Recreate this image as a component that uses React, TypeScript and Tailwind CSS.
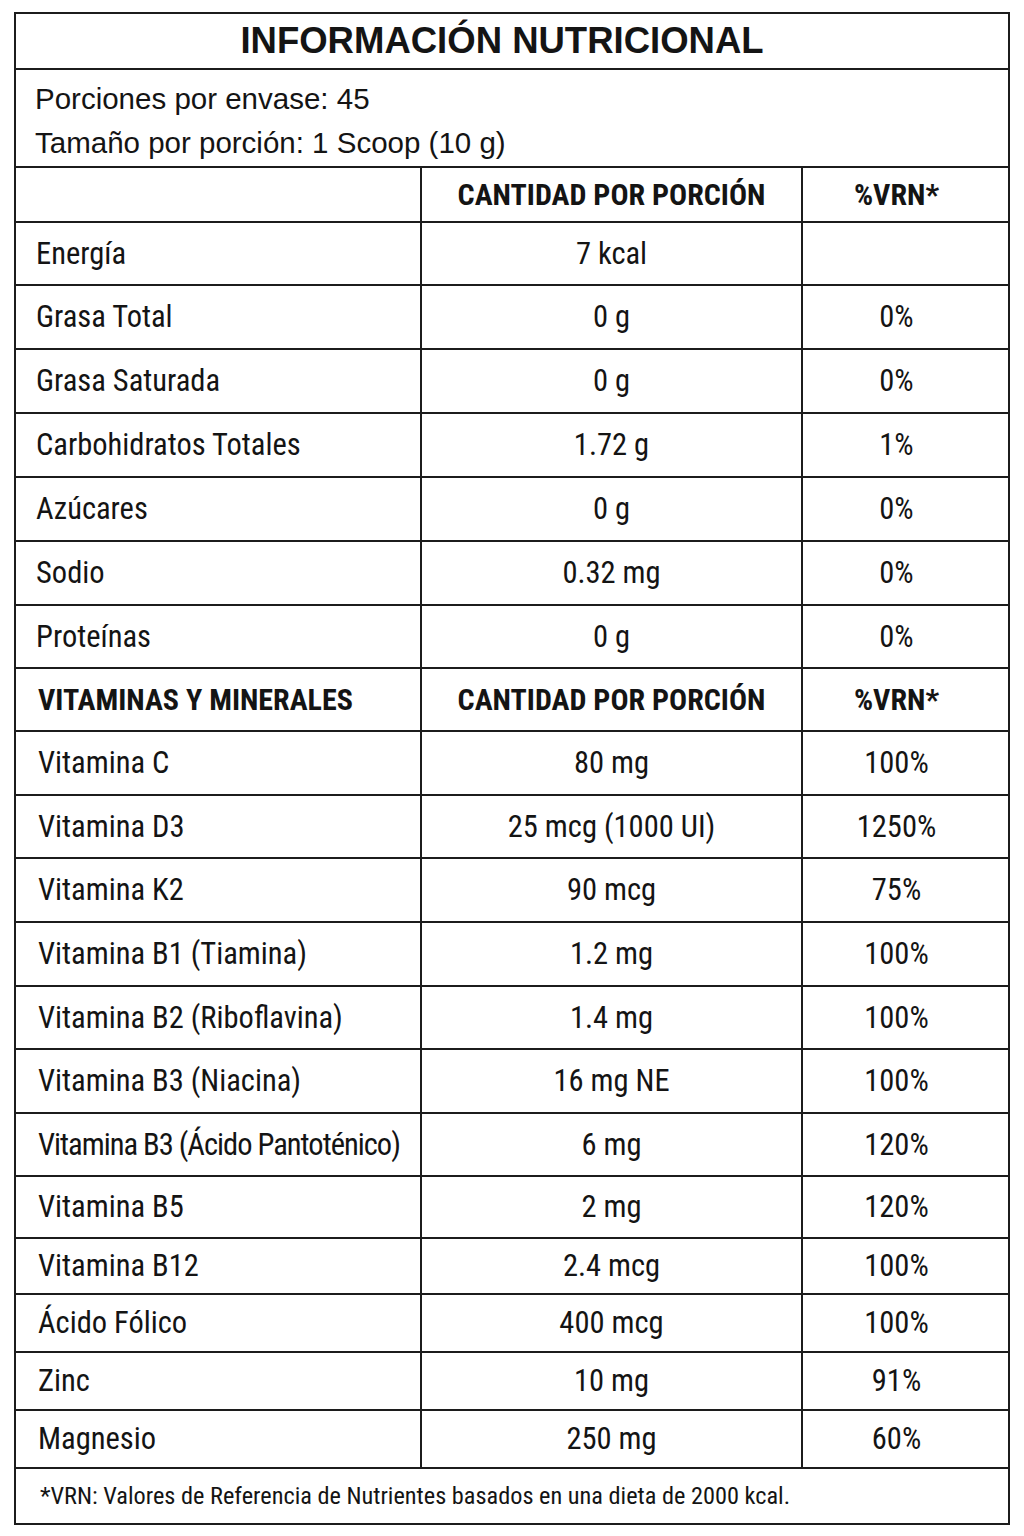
const narrow = "font-['Roboto',sans-serif] font-stretch-condensed"

type Row = { name: string; amount: string; vrn: string; h: string; tight?: boolean }

const nutrients: Row[] = [
  { name: 'Energía', amount: '7 kcal', vrn: '', h: 'h-[63px]' },
  { name: 'Grasa Total', amount: '0 g', vrn: '0%', h: 'h-[64px]' },
  { name: 'Grasa Saturada', amount: '0 g', vrn: '0%', h: 'h-[64px]' },
  { name: 'Carbohidratos Totales', amount: '1.72 g', vrn: '1%', h: 'h-[64px]' },
  { name: 'Azúcares', amount: '0 g', vrn: '0%', h: 'h-[64px]' },
  { name: 'Sodio', amount: '0.32 mg', vrn: '0%', h: 'h-[64px]' },
  { name: 'Proteínas', amount: '0 g', vrn: '0%', h: 'h-[63px]' },
]

const vitamins: Row[] = [
  { name: 'Vitamina C', amount: '80 mg', vrn: '100%', h: 'h-[64px]' },
  { name: 'Vitamina D3', amount: '25 mcg (1000 UI)', vrn: '1250%', h: 'h-[63px]' },
  { name: 'Vitamina K2', amount: '90 mcg', vrn: '75%', h: 'h-[64px]' },
  { name: 'Vitamina B1 (Tiamina)', amount: '1.2 mg', vrn: '100%', h: 'h-[64px]' },
  { name: 'Vitamina B2 (Riboflavina)', amount: '1.4 mg', vrn: '100%', h: 'h-[63px]' },
  { name: 'Vitamina B3 (Niacina)', amount: '16 mg NE', vrn: '100%', h: 'h-[64px]' },
  { name: 'Vitamina B3 (Ácido Pantoténico)', amount: '6 mg', vrn: '120%', h: 'h-[63px]', tight: true },
  { name: 'Vitamina B5', amount: '2 mg', vrn: '120%', h: 'h-[62px]' },
  { name: 'Vitamina B12', amount: '2.4 mcg', vrn: '100%', h: 'h-[56px]' },
  { name: 'Ácido Fólico', amount: '400 mcg', vrn: '100%', h: 'h-[58px]' },
  { name: 'Zinc', amount: '10 mg', vrn: '91%', h: 'h-[58px]' },
  { name: 'Magnesio', amount: '250 mg', vrn: '60%', h: 'h-[58px]' },
]

function TableRow({ r, pad }: { r: Row; pad: string }) {
  return (
    <div className={`flex border-b-2 border-[#1c1c1c] ${r.h} ${narrow} text-[30.5px] text-[#141414]`}>
      <div
        className={`w-[406px] shrink-0 border-r-2 border-[#1c1c1c] flex items-center whitespace-nowrap ${pad} ${r.tight ? 'tracking-[-1px]' : ''}`}
      >
        {r.name}
      </div>
      <div className="w-[381px] shrink-0 border-r-2 border-[#1c1c1c] flex items-center justify-center">{r.amount}</div>
      <div className="flex-1 flex items-center justify-center pr-[18px]">{r.vrn}</div>
    </div>
  )
}

export default function App() {
  return (
    <div className="w-[1024px] h-[1536px] bg-white pt-[12px] pl-[14px]">
      <div className="w-[996px] border-2 border-[#1c1c1c] text-[#141414]">
        <div className="h-[56px] border-b-2 border-[#1c1c1c] flex items-center justify-center pr-[20px] font-['Liberation_Sans',Arial,sans-serif] font-bold text-[36.5px]">
          INFORMACIÓN NUTRICIONAL
        </div>
        <div className="h-[98px] border-b-2 border-[#1c1c1c] pl-[19px] pt-[7px] font-['Liberation_Sans',Arial,sans-serif] text-[29.5px] leading-[44px]">
          <div>Porciones por envase: 45</div>
          <div>Tamaño por porción: 1 Scoop (10 g)</div>
        </div>
        <div className={`flex border-b-2 border-[#1c1c1c] h-[55px] ${narrow} font-bold text-[30px]`}>
          <div className="w-[406px] shrink-0 border-r-2 border-[#1c1c1c]" />
          <div className="w-[381px] shrink-0 border-r-2 border-[#1c1c1c] flex items-center justify-center">CANTIDAD POR PORCIÓN</div>
          <div className="flex-1 flex items-center justify-center pr-[18px]">%VRN*</div>
        </div>
        {nutrients.map((r) => (
          <TableRow key={r.name} r={r} pad="pl-[20px]" />
        ))}
        <div className={`flex border-b-2 border-[#1c1c1c] h-[63px] ${narrow} font-bold text-[30px]`}>
          <div className="w-[406px] shrink-0 border-r-2 border-[#1c1c1c] flex items-center pl-[22px]">VITAMINAS Y MINERALES</div>
          <div className="w-[381px] shrink-0 border-r-2 border-[#1c1c1c] flex items-center justify-center">CANTIDAD POR PORCIÓN</div>
          <div className="flex-1 flex items-center justify-center pr-[18px]">%VRN*</div>
        </div>
        {vitamins.map((r) => (
          <TableRow key={r.name} r={r} pad="pl-[22px]" />
        ))}
        <div className={`h-[54px] flex items-center pl-[24px] ${narrow} text-[24.3px]`}>
          *VRN: Valores de Referencia de Nutrientes basados en una dieta de 2000 kcal.
        </div>
      </div>
    </div>
  )
}
